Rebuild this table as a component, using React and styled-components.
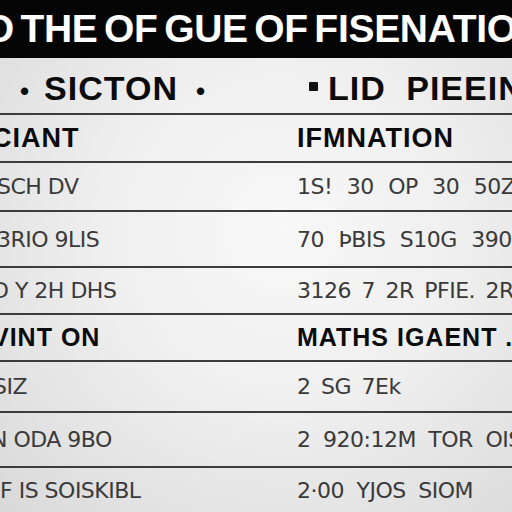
import React from 'react';
import styled, { createGlobalStyle } from 'styled-components';

const GlobalStyle = createGlobalStyle`
  html, body {
    margin: 0;
    padding: 0;
    width: 512px;
    height: 512px;
    overflow: hidden;
    background: #e6e6e6;
  }
`;

const Page = styled.div`
  width: 512px;
  height: 512px;
  overflow: hidden;
  display: flex;
  flex-direction: column;
  background: radial-gradient(ellipse at 55% 45%, #f8f8f8 0%, #efefef 45%, #d9d9d9 100%);
  font-family: "Liberation Sans", Arial, sans-serif;
`;

const Banner = styled.div`
  height: 58px;
  flex: none;
  background: #050505;
  color: #ffffff;
  display: flex;
  align-items: center;
  overflow: hidden;
  white-space: nowrap;
`;

const BannerText = styled.h1`
  margin: 0 0 0 -14px;
  font-size: 39px;
  font-weight: 700;
  letter-spacing: -0.3px;
  word-spacing: -4px;
`;

const Table = styled.div`
  flex: 1;
  display: grid;
  grid-template-columns: 297px 1fr;
  grid-template-rows: 57px 48px 49px 56px 47px 47px 51px 55px 1fr;
`;

const Cell = styled.div`
  display: flex;
  align-items: center;
  overflow: hidden;
  white-space: nowrap;
  border-bottom: ${(p) => (p.last ? 'none' : '2px solid #3c3c3c')};
  color: ${(p) => (p.bold ? '#0b0b0b' : '#3a3a3a')};
  font-weight: ${(p) => (p.bold ? 700 : 400)};
  font-size: ${(p) => p.size || 22}px;
  font-family: ${(p) => (p.bold ? '"Liberation Sans", Arial, sans-serif' : '"DejaVu Sans", "Liberation Sans", sans-serif')};
  letter-spacing: ${(p) => (p.bold ? '1px' : '-0.5px')};
  word-spacing: ${(p) => p.gap || 0}px;
  padding-top: ${(p) => p.lift || 0}px;
`;

const Text = styled.span`
  flex: none;
  margin-left: ${(p) => p.shift || 0}px;
`;

const Dot = styled.span`
  font-size: 26px;
  margin: ${(p) => (p.after ? '0 0 0 18px' : '0 14px 0 0')};
`;

const Square = styled.span`
  flex: none;
  display: inline-block;
  width: 9px;
  height: 9px;
  background: #111;
  margin: 0 10px 4px 12px;
  border-radius: 1px;
`;

const rows = [
  { bold: true, left: 'CIANT', shift: -8, right: 'IFMNATION', size: 27 },
  { left: 'SCH DV', shift: -3, right: '1S! 30 OP 30 50Z', gap: 8 },
  { left: '3RIO 9LIS', shift: -3, right: '70 ÞBIS S10G 390', gap: 8 },
  { left: 'D Y 2H DHS', shift: -8, right: '3126 7 2R PFIE. 2R', gap: 4 },
  { bold: true, left: 'VINT ON', shift: -8, right: 'MATHS IGAENT .', size: 25 },
  { left: 'SIZ', shift: -7, right: '2 SG 7Ek', gap: 4 },
  { left: 'N ODA 9BO', shift: -9, right: '2 920:12M TOR OIS', gap: 6 },
  { left: 'F IS SOISKIBL', shift: 0, right: '2·00 YJOS SIOM', gap: 6, last: true },
];

const App = () => {
  return (
    <Page>
      <GlobalStyle />
      <Banner>
        <BannerText>D THE OF GUE OF FISENATION</BannerText>
      </Banner>
      <Table>
        <Cell bold size={34} lift={6}>
          <Text shift={20}>
            <Dot>•</Dot>SICTON<Dot after>•</Dot>
          </Text>
        </Cell>
        <Cell bold size={34} lift={6} gap={10}>
          <Square />
          <Text>LID PIEEIN</Text>
        </Cell>
        {rows.map((row, i) => (
          <React.Fragment key={i}>
            <Cell bold={row.bold} size={row.size} last={row.last}>
              <Text shift={row.shift}>{row.left}</Text>
            </Cell>
            <Cell bold={row.bold} size={row.size} gap={row.gap} last={row.last}>
              <Text>{row.right}</Text>
            </Cell>
          </React.Fragment>
        ))}
      </Table>
    </Page>
  );
};

export default App;
